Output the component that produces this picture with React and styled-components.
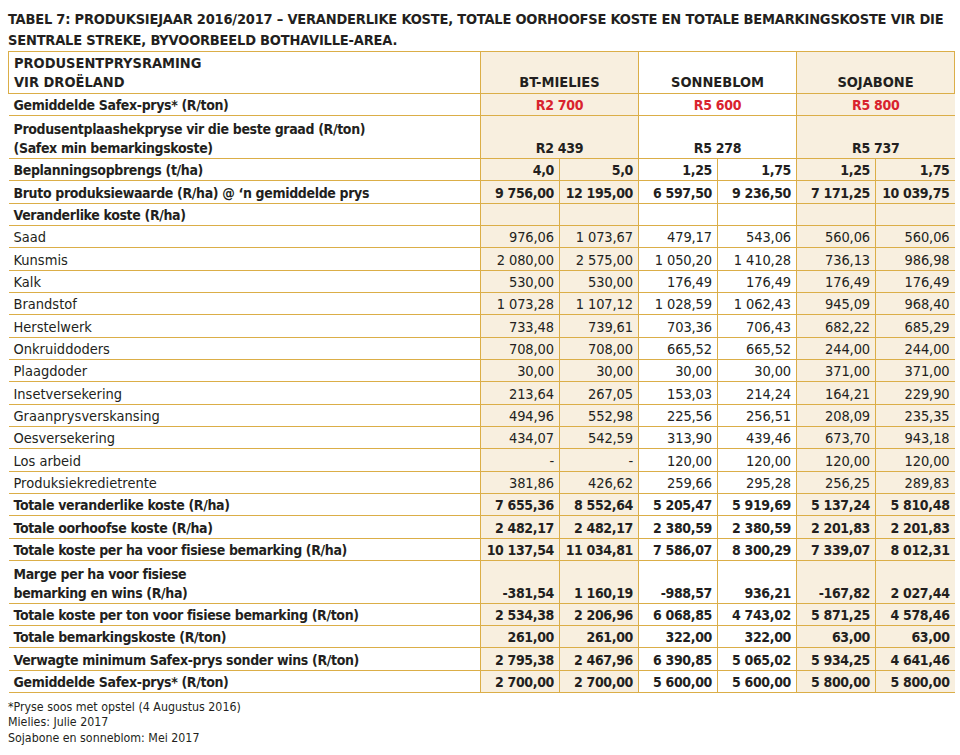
import React from 'react'
import styled, { createGlobalStyle } from 'styled-components'

const GlobalStyle = createGlobalStyle`
  body {
    margin: 0;
    background: #fff;
    font-family: "Liberation Sans Narrow", "DejaVu Sans Condensed", "Liberation Sans", sans-serif;
    color: #231f20;
  }
`

const GOLD = '#dbae48'
const BEIGE = '#f8efdf'

const groups = [
    { name: 'BT-MIELIES', safex: 'R2 700', gate: 'R2 439', shade: true },
    { name: 'SONNEBLOM', safex: 'R5 600', gate: 'R5 278', shade: false },
    { name: 'SOJABONE', safex: 'R5 800', gate: 'R5 737', shade: true },
]

const rows = [
    { label: 'Beplanningsopbrengs (t/ha)', bold: true, values: ['4,0', '5,0', '1,25', '1,75', '1,25', '1,75'] },
    { label: 'Bruto produksiewaarde (R/ha) @ ‘n gemiddelde prys', bold: true, values: ['9 756,00', '12 195,00', '6 597,50', '9 236,50', '7 171,25', '10 039,75'] },
    { label: 'Veranderlike koste (R/ha)', bold: true, values: ['', '', '', '', '', ''] },
    { label: 'Saad', values: ['976,06', '1 073,67', '479,17', '543,06', '560,06', '560,06'] },
    { label: 'Kunsmis', values: ['2 080,00', '2 575,00', '1 050,20', '1 410,28', '736,13', '986,98'] },
    { label: 'Kalk', values: ['530,00', '530,00', '176,49', '176,49', '176,49', '176,49'] },
    { label: 'Brandstof', values: ['1 073,28', '1 107,12', '1 028,59', '1 062,43', '945,09', '968,40'] },
    { label: 'Herstelwerk', values: ['733,48', '739,61', '703,36', '706,43', '682,22', '685,29'] },
    { label: 'Onkruiddoders', values: ['708,00', '708,00', '665,52', '665,52', '244,00', '244,00'] },
    { label: 'Plaagdoder', values: ['30,00', '30,00', '30,00', '30,00', '371,00', '371,00'] },
    { label: 'Insetversekering', values: ['213,64', '267,05', '153,03', '214,24', '164,21', '229,90'] },
    { label: 'Graanprysverskansing', values: ['494,96', '552,98', '225,56', '256,51', '208,09', '235,35'] },
    { label: 'Oesversekering', values: ['434,07', '542,59', '313,90', '439,46', '673,70', '943,18'] },
    { label: 'Los arbeid', values: ['-', '-', '120,00', '120,00', '120,00', '120,00'] },
    { label: 'Produksiekredietrente', values: ['381,86', '426,62', '259,66', '295,28', '256,25', '289,83'] },
    { label: 'Totale veranderlike koste (R/ha)', bold: true, values: ['7 655,36', '8 552,64', '5 205,47', '5 919,69', '5 137,24', '5 810,48'] },
    { label: 'Totale oorhoofse koste (R/ha)', bold: true, values: ['2 482,17', '2 482,17', '2 380,59', '2 380,59', '2 201,83', '2 201,83'] },
    { label: 'Totale koste per ha voor fisiese bemarking (R/ha)', bold: true, values: ['10 137,54', '11 034,81', '7 586,07', '8 300,29', '7 339,07', '8 012,31'] },
    { label: ['Marge per ha voor fisiese', 'bemarking en wins (R/ha)'], bold: true, values: ['-381,54', '1 160,19', '-988,57', '936,21', '-167,82', '2 027,44'] },
    { label: 'Totale koste per ton voor fisiese bemarking (R/ton)', bold: true, values: ['2 534,38', '2 206,96', '6 068,85', '4 743,02', '5 871,25', '4 578,46'] },
    { label: 'Totale bemarkingskoste (R/ton)', bold: true, values: ['261,00', '261,00', '322,00', '322,00', '63,00', '63,00'] },
    { label: 'Verwagte minimum Safex-prys sonder wins (R/ton)', bold: true, values: ['2 795,38', '2 467,96', '6 390,85', '5 065,02', '5 934,25', '4 641,46'] },
    { label: 'Gemiddelde Safex-prys* (R/ton)', bold: true, values: ['2 700,00', '2 700,00', '5 600,00', '5 600,00', '5 800,00', '5 800,00'] },
]

function renderLabel(label) {
    if (Array.isArray(label)) {
        return label.map((l, i) => <div key={i}>{l}</div>)
    }
    return label
}

function App() {
    return (
        <Page>
            <GlobalStyle />
            <Title>
                TABEL 7: PRODUKSIEJAAR 2016/2017 – VERANDERLIKE KOSTE, TOTALE OORHOOFSE KOSTE EN TOTALE BEMARKINGSKOSTE VIR DIE SENTRALE STREKE, BYVOORBEELD BOTHAVILLE-AREA.
            </Title>
            <Table>
                <colgroup>
                    <col style={{ width: 472 }} />
                    {[0, 1, 2, 3, 4, 5].map((i) => <col key={i} style={{ width: 79 }} />)}
                </colgroup>
                <tbody>
                    <HeadRow>
                        <HeadLabel>
                            <div>PRODUSENTPRYSRAMING</div>
                            <div>VIR DROËLAND</div>
                        </HeadLabel>
                        {groups.map((g) => (
                            <HeadCell key={g.name} colSpan={2} $shade={g.shade}>{g.name}</HeadCell>
                        ))}
                    </HeadRow>
                    <Row>
                        <Label $bold>Gemiddelde Safex-prys* (R/ton)</Label>
                        {groups.map((g) => (
                            <Merged key={g.name} colSpan={2} $shade={g.shade} $red>{g.safex}</Merged>
                        ))}
                    </Row>
                    <Row $tall>
                        <Label $bold>
                            <div>Produsentplaashekpryse vir die beste graad (R/ton)</div>
                            <div>(Safex min bemarkingskoste)</div>
                        </Label>
                        {groups.map((g) => (
                            <Merged key={g.name} colSpan={2} $shade={g.shade}>{g.gate}</Merged>
                        ))}
                    </Row>
                    {rows.map((r, idx) => (
                        <Row key={idx} $tall={Array.isArray(r.label)}>
                            <Label $bold={r.bold}>{renderLabel(r.label)}</Label>
                            {r.values.map((v, i) => (
                                <Num key={i} $bold={r.bold} $shade={i < 2 || i > 3}>{v}</Num>
                            ))}
                        </Row>
                    ))}
                </tbody>
            </Table>
            <Notes>
                <div>*Pryse soos met opstel (4 Augustus 2016)</div>
                <div>Mielies: Julie 2017</div>
                <div>Sojabone en sonneblom: Mei 2017</div>
            </Notes>
        </Page>
    )
}

export default App

const Page = styled.div`
    width: 960px;
    height: 755px;
    padding: 9px 4px 0 8px;
    box-sizing: border-box;
`

const Title = styled.div`
    font-weight: 700;
    font-size: 14.5px;
    line-height: 21px;
    letter-spacing: -0.2px;
    text-transform: uppercase;
    width: 950px;
`

const Table = styled.table`
    border-collapse: collapse;
    table-layout: fixed;
    width: 946px;
    font-size: 14.5px;
    td {
        padding: 0 5px;
        border-bottom: 1.5px solid ${GOLD};
        line-height: 19px;
    }
`

const HeadRow = styled.tr`
    height: 42px;
    td {
        border-top: 1.5px solid ${GOLD};
        vertical-align: bottom;
        padding-bottom: 1px;
    }
`

const HeadLabel = styled.td`
    font-weight: 700;
    border-left: 1.5px solid ${GOLD};
`

const HeadCell = styled.td`
    font-weight: 700;
    text-align: center;
    border-left: 1.5px solid ${GOLD};
    background: ${(p) => (p.$shade ? BEIGE : '#fff')};
    &:last-child {
        border-right: 1.5px solid ${GOLD};
    }
`

const Row = styled.tr`
    height: ${(p) => (p.$tall ? '42.5px' : '22.35px')};
    td {
        vertical-align: bottom;
    }
`

const Label = styled.td`
    font-weight: ${(p) => (p.$bold ? 700 : 400)};
    font-size: ${(p) => (p.$bold ? '14px' : '14.5px')};
    letter-spacing: ${(p) => (p.$bold ? '-0.35px' : '0')};
`

const Merged = styled.td`
    font-weight: 700;
    font-size: 14px;
    letter-spacing: -0.3px;
    text-align: center;
    border-left: 1.5px solid ${GOLD};
    background: ${(p) => (p.$shade ? BEIGE : '#fff')};
    color: ${(p) => (p.$red ? '#d9232e' : 'inherit')};
`

const Num = styled.td`
    font-weight: ${(p) => (p.$bold ? 700 : 400)};
    font-size: ${(p) => (p.$bold ? '14px' : '14.5px')};
    letter-spacing: ${(p) => (p.$bold ? '-0.35px' : '-0.1px')};
    text-align: right;
    white-space: nowrap;
    border-left: 1.5px solid ${GOLD};
    background: ${(p) => (p.$shade ? BEIGE : '#fff')};
`

const Notes = styled.div`
    margin-top: 7px;
    font-size: 12.3px;
    line-height: 15.5px;
`
